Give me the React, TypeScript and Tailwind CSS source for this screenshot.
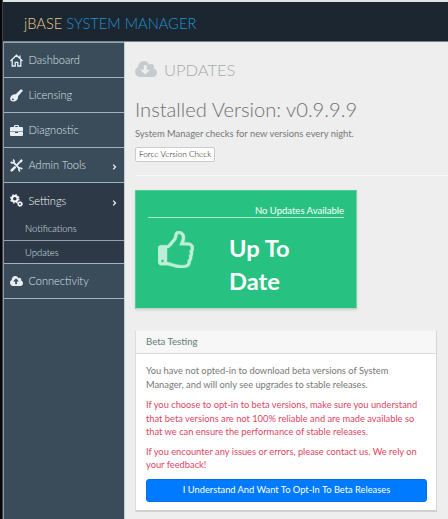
import type { ReactNode } from "react";

const cloud =
  "M1856 1152q0 159-112.5 271.5t-271.5 112.5h-1088q-185 0-316.5-131.5t-131.5-316.5q0-130 70-240t188-165q-2-30-2-43 0-212 150-362t362-150q156 0 285.500 87t188.500 231q71-62 166-62 106 0 181 75t75 181q0 76-41 138 130 31 213.500 135.500t83.500 238.500z";

function CloudDown({ className }: { className: string }) {
  return (
    <svg viewBox="-64 128 1920 1408" preserveAspectRatio="none" fill="currentColor" className={className}>
      <path
        fillRule="evenodd"
        d={"M1216 928q0-14-9-23t-23-9h-224v-352q0-13-9.5-22.5t-22.5-9.5h-192q-13 0-22.5 9.5t-9.5 22.5v352h-224q-13 0-22.5 9.5t-9.5 22.5q0 14 9 23l352 352q9 9 23 9t23-9l351-351q10-12 10-24z" + cloud}
      />
    </svg>
  );
}

function CloudUp() {
  return (
    <svg viewBox="-64 128 1920 1408" preserveAspectRatio="none" fill="currentColor" className="h-[10px] w-[13px]">
      <path
        fillRule="evenodd"
        d={"M1216 864q0-14-9-23l-352-352q-9-9-23-9t-23 9l-351 351q-10 12-10 24 0 14 9 23t23 9h224v352q0 13 9.5 22.5t22.5 9.5h192q13 0 22.5-9.5t9.5-22.5v-352h224q13 0 22.5-9.5t9.5-22.5z" + cloud}
      />
    </svg>
  );
}

function Thumb() {
  return (
    <svg viewBox="192 0 1536 1664" preserveAspectRatio="none" fill="currentColor" className="h-[37px] w-[36px]">
      <path
        fillRule="evenodd"
        stroke="currentColor"
        strokeWidth="20"
        d="M448 1344q0-26-19-45t-45-19q-27 0-45.5 19t-18.5 45q0 27 18.5 45.5t45.5 18.5q26 0 45-18.5t19-45.5zM1600 768q0-51-39-89.5t-89-38.5h-352q0-58 48-159.5t48-160.5q0-98-32-145t-128-47q-26 26-38 85t-30.5 125.5-59.5 109.5q-22 23-77 91-4 5-23 30t-31.5 41-34.5 42.5-40 44-38.5 35.5-40 27-35.5 9h-32v640h32q13 0 31.5 3t33 6.5 38 11 35 11.5 35.5 12.5 29 10.5q211 73 342 73h121q192 0 192-167 0-26-5-56 30-16 47.5-52.5t17.5-73.5-18-69q53-50 53-119 0-25-10-55.5t-25-47.5q32-1 53.5-47t21.5-81zM1728 767q0 89-49 163 9 33 9 69 0 77-38 144 3 21 3 43 0 101-60 178 1 139-85 219.5t-227 80.5h-129q-96 0-189.5-22.5t-216.5-65.5q-116-40-138-40h-288q-53 0-90.5-37.5t-37.5-90.5v-640q0-53 37.5-90.5t90.5-37.5h274q36-24 137-155 58-75 107-128 24-25 35.5-85.5t30.5-126.5 62-108q39-37 90-37 84 0 151 32.5t102 101.5 35 186q0 93-48 192h176q104 0 180 76t76 179z"
      />
    </svg>
  );
}

function Home() {
  return (
    <svg viewBox="0 0 13 13" fill="none" stroke="currentColor" strokeWidth="1.3" className="size-[13px]">
      <path d="M.5 7 6.5 1.200 12.500 7M2.200 6v6h3V8.300h2.600V12h3V6M10 1.500v2.500" />
    </svg>
  );
}

function Key() {
  return (
    <svg viewBox="0 0 13 13" className="size-[13px]">
      <path fill="currentColor" fillRule="evenodd" d="M10.800.3 12.600.9 12.500 2.700 11.300 3.100 11.100 4.300 9.900 4.700 9.300 6 8 7Q8.500 9.500 6.700 11.200C4.700 13 1.900 13 .7 11.500-.3 10 .2 7.600 2 6.200Q3.600 4.900 5.700 5.200ZM2.200 9.700a.9.9 0 1 0 1.300 1.300.9.9 0 0 0-1.300-1.300Z" />
    </svg>
  );
}

function Briefcase() {
  return (
    <svg viewBox="0 0 13 11" className="h-[11px] w-[13px]">
      <path fill="currentColor" fillRule="evenodd" d="M4 2V1q0-1 1-1h3q1 0 1 1v1h3q1 0 1 1v3.500H0V3q0-1 1-1ZM5.200 2h2.600v-.9H5.200ZM0 7.100h5V8h3v-.9h5V10q0 1-1 1H1q-1 0-1-1Z" />
    </svg>
  );
}

function Tools() {
  return (
    <svg viewBox="0 0 13 13" fill="none" stroke="currentColor" className="size-[13px]">
      <path strokeWidth="1.900" d="m3.200 3.200 6.600 6.600M11.300 1.700 6.800 6.200" />
      <path strokeWidth="2.600" strokeLinecap="round" d="m1.700 11.300 3-3" />
      <path strokeWidth="1.600" d="M3 .7q1.900 1.600.9 2.800T.7 3M10 12.300Q8.200 10.600 9.200 9.500t3.100.5" />
      <path strokeWidth="2.200" d="m10.400 2.600 1.700-1.700" />
    </svg>
  );
}

function Cogs() {
  return (
    <svg viewBox="0 0 13 13" fill="none" stroke="#f5f8fa" className="size-[13px]">
      <circle cx="4.800" cy="4.800" r="2.800" strokeWidth="2" />
      <circle cx="4.800" cy="4.800" r="4.200" strokeWidth="1.200" strokeDasharray="1.700 1.600" />
      <circle cx="10" cy="10" r="1.600" strokeWidth="1.400" />
      <circle cx="10" cy="10" r="2.500" strokeWidth=".9" strokeDasharray="1.200 .76" />
    </svg>
  );
}

function Row({ icon, label, active, arrow }: { icon: ReactNode; label: string; active?: boolean; arrow?: boolean }) {
  return (
    <div className={`flex h-[35px] shrink-0 items-center pl-[6px] pr-[7px] ${active ? "bg-[#2d3946] text-[#f5f8fa]" : "border-b border-[#a0b2bc] text-[#dce4e8]"}`}>
      <span className="flex w-[18.500px] shrink-0 items-center text-[#e8eff3]">{icon}</span>
      <span className="flex-1 whitespace-nowrap pt-px text-[11px]">{label}</span>
      {arrow && (
        <svg viewBox="0 0 5 7" fill="none" stroke="#f0f4f6" strokeWidth="1.500" className="mt-[4px] h-[6px] w-[5px]">
          <path d="m1 .7 2.700 2.800L1 6.300" />
        </svg>
      )}
    </div>
  );
}

export default function App() {
  return (
    <div className="flex h-[519px] w-[448px] overflow-hidden bg-[#eee] font-['Lato',sans-serif]">
      <div className="w-[3px] shrink-0 border-r border-[#3d424a] bg-[#080707]" />
      <div className="flex min-w-0 flex-1 flex-col">
        <header className="flex h-[42px] shrink-0 items-center border-b border-t-2 border-b-[#78838a] border-t-[#dfe3e5] bg-[#1b2631] pl-[21px] pt-[3px] text-[14.700px] font-light">
          <span className="whitespace-nowrap text-[#e8c98e]">jBASE <span className="text-[#2492cf]">SYSTEM MANAGER</span></span>
        </header>
        <div className="flex min-h-0 flex-1">
          <nav className="flex w-[122px] shrink-0 flex-col border-x border-l-[#8b9aa5] border-r-[#c4cdd2] bg-[#3a4b59] font-light">
            <div className="h-px shrink-0 bg-[#94a5af]" />
            <Row icon={<Home />} label="Dashboard" />
            <Row icon={<Key />} label="Licensing" />
            <Row icon={<Briefcase />} label="Diagnostic" />
            <Row icon={<Tools />} label="Admin Tools" arrow />
            <Row icon={<Cogs />} label="Settings" active arrow />
            <div className="flex h-[23px] items-center border-b border-[#93a1ab] bg-[#2d3946] pl-[21px] text-[9.450px] text-[#dce4e8]">Notifications</div>
            <div className="flex h-[23px] items-center border-b border-[#a0b2bc] bg-[#2d3946] pl-[21px] pt-[2px] text-[9.450px] text-[#dce4e8]">Updates</div>
            <Row icon={<CloudUp />} label="Connectivity" />
          </nav>
          <main className="min-w-0 flex-1 pl-[10px]">
            <div className="mt-[17px] flex h-[22px] items-center text-[#a5abae]">
              <CloudDown className="mb-[3px] h-[16px] w-[22px] text-[#c6cbce]" />
              <h1 className="ml-[7px] text-[16.500px] font-light">UPDATES</h1>
            </div>
            <h2 className="mt-[15px] h-[27px] whitespace-nowrap text-[20.150px] font-light leading-[27px] text-[#707070]">Installed Version: v0.9.9.9</h2>
            <p className="mt-[4px] h-[14px] whitespace-nowrap text-[9.400px] leading-[14px] text-[#777]">System Manager checks for new versions every night.</p>
            <button className="mt-[6px] flex h-[15px] w-[80px] items-center justify-center whitespace-nowrap rounded-[2px] border border-[#ccc] bg-white text-[8.200px] font-light text-black">Force Version Check</button>
            <div className="mt-[13px] h-px bg-[#f5f5f5]" />
            <section className="mt-[14px] h-[119px] w-[222px] border border-b-[#b7dac9] border-l-[#55cb98] border-r-[#76d1a7] border-t-[#55cb98] bg-[#27c281] px-[12px] pt-[13px] text-white shadow-sm">
              <div className="h-[14px] border-b border-[#aee7cf] text-right text-[9.500px] leading-[13px]">No Updates Available</div>
              <div className="flex">
                <div className="w-[81px] pl-[10px] pt-[13px] text-[#bceed8]"><Thumb /></div>
                <div className="pt-[14px] text-[23.700px] font-bold leading-[33px]">Up To<br />Date</div>
              </div>
            </section>
            <section className="mt-[21px] h-[182px] w-[302px] border border-b-2 border-b-[#d0d0d0] border-l-[#ddd] border-r-[#d5d5d5] border-t-[#f3f3f3] bg-white text-[9.300px] leading-[13.500px]">
              <div className="h-[23px] border-b border-[#ddd] bg-[#f7f7f7] pl-[10px] text-[9.600px] leading-[22px] text-[#628075]">Beta Testing</div>
              <div className="whitespace-nowrap px-[10px] pt-[10px]">
                <p className="text-[#777]">You have not opted-in to download beta versions of System<br />Manager, and will only see upgrades to stable releases.</p>
                <p className="mt-[7px] text-[#dc4664]">If you choose to opt-in to beta versions, make sure you understand<br />that beta versions are not 100% reliable and are made available so<br />that we can ensure the performance of stable releases.</p>
                <p className="mt-[6px] text-[#dc4664]">If you encounter any issues or errors, please contact us. We rely on<br />your feedback!</p>
                <button className="mt-[7px] flex h-[23px] w-[281px] items-center justify-center rounded-[3px] border border-[#006fe8] bg-[#007bff] text-[9.300px] text-white">I Understand And Want To Opt-In To Beta Releases</button>
              </div>
            </section>
          </main>
        </div>
      </div>
    </div>
  );
}
